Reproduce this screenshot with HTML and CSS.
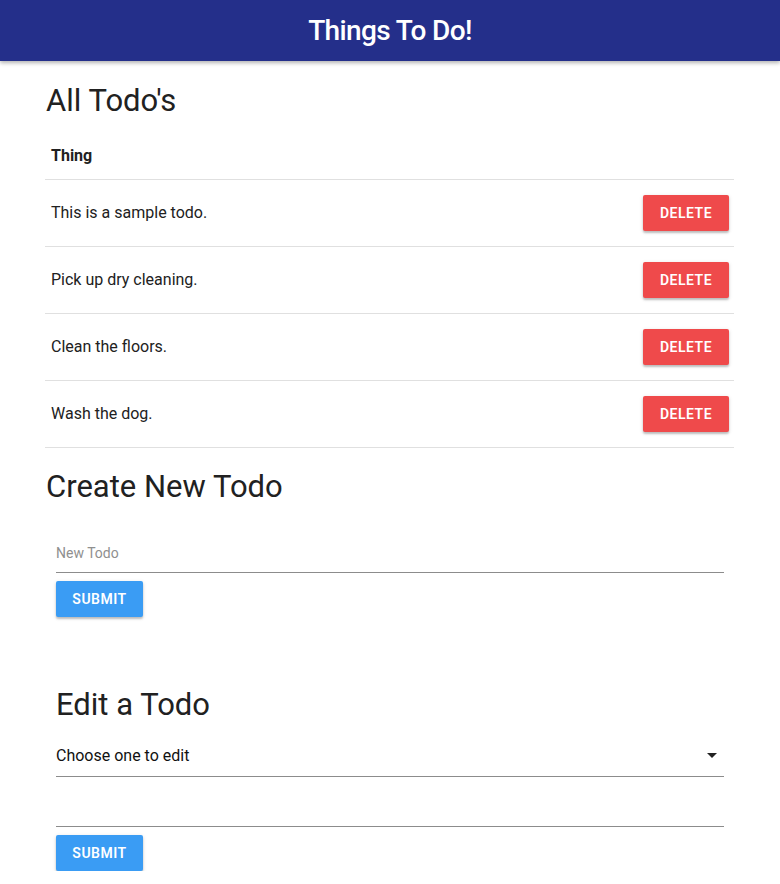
FILE: index.html
```html
<!DOCTYPE html>
<html>
<head>
<meta charset="utf-8">
<title>Things To Do!</title>
<link rel="stylesheet" href="styles.css">
</head>
<body>
<header class="appbar"><h1 class="appbar-title">Things To Do!</h1></header>
<main class="container">
  <h2 class="section-title">All Todo's</h2>
  <table class="todo-table">
    <thead><tr><th>Thing</th><th></th></tr></thead>
    <tbody>
      <tr><td>This is a sample todo.</td><td class="action"><button class="btn btn-red">Delete</button></td></tr>
      <tr><td>Pick up dry cleaning.</td><td class="action"><button class="btn btn-red">Delete</button></td></tr>
      <tr><td>Clean the floors.</td><td class="action"><button class="btn btn-red">Delete</button></td></tr>
      <tr><td>Wash the dog.</td><td class="action"><button class="btn btn-red">Delete</button></td></tr>
    </tbody>
  </table>
  <h2 class="section-title create-title">Create New Todo</h2>
  <form class="form">
    <div class="field"><span class="placeholder">New Todo</span></div>
    <button type="button" class="btn btn-blue">Submit</button>
  </form>
  <form class="form edit-form">
    <h2 class="section-title edit-title">Edit a Todo</h2>
    <div class="field select-field"><span class="select-text">Choose one to edit</span><span class="caret"></span></div>
    <div class="field empty-field"></div>
    <button type="button" class="btn btn-blue">Submit</button>
  </form>
</main>
</body>
</html>
```
FILE: styles.css
```css
* { box-sizing: border-box; }
body {
  margin: 0;
  font-family: Roboto, "Liberation Sans", sans-serif;
  color: #212121;
  background: #fff;
}
.appbar {
  height: 61px;
  background: #242f8a;
  display: flex;
  align-items: center;
  justify-content: center;
  box-shadow: 0 2px 4px rgba(0,0,0,0.3);
}
.appbar-title {
  margin: 0;
  color: #fff;
  font-size: 28px;
  font-weight: 500;
  letter-spacing: -0.6px;
}
.container {
  padding: 22px 46px 0 45px;
}
.section-title {
  margin: 0;
  font-weight: 400;
  font-size: 31px;
  line-height: 36px;
  padding-left: 1px;
}
.todo-table {
  width: 100%;
  border-collapse: collapse;
  margin-top: 14px;
}
.todo-table th {
  text-align: left;
  font-weight: 700;
  font-size: 16px;
  height: 46px;
  padding: 0 6px;
  border-bottom: 1px solid #e0e0e0;
}
.todo-table td {
  font-size: 16px;
  height: 67px;
  padding: 0 6px;
  border-bottom: 1px solid #e0e0e0;
}
.todo-table td.action { text-align: right; padding-right: 5px; }
.btn {
  border: none;
  border-radius: 2px;
  color: #fff;
  font-family: Roboto, "Liberation Sans", sans-serif;
  font-weight: 600;
  font-size: 14px;
  text-transform: uppercase;
  letter-spacing: 0.5px;
  height: 36px;
  padding: 0 12px;
  box-shadow: 0 2px 2px rgba(0,0,0,0.2), 0 1px 4px rgba(0,0,0,0.12);
}
.btn-red { background: #ef4a4b; width: 86px; }
.btn-blue { background: #3a9cf4; width: 87px; }
.create-title { margin-top: 21px; }
.form {
  padding: 0 10px 0 11px;
}
.field {
  height: 40px;
  border-bottom: 1px solid #8c8c8c;
  display: flex;
  align-items: center;
}
.form > .field:first-child { margin-top: 28px; margin-bottom: 8px; }
.placeholder {
  color: #8f8f8f;
  font-size: 14px;
  padding-top: 2px;
}
.edit-form { margin-top: 70px; }
.edit-title { padding-left: 0; }
.select-field {
  margin-top: 13px;
  justify-content: space-between;
  height: 41px;
}
.select-text { font-size: 16px; color: #111; }
.caret {
  width: 0; height: 0;
  border-left: 5px solid transparent;
  border-right: 5px solid transparent;
  border-top: 5px solid #222;
  margin-right: 7px;
}
.empty-field { height: 50px; margin-bottom: 8px; }
```
